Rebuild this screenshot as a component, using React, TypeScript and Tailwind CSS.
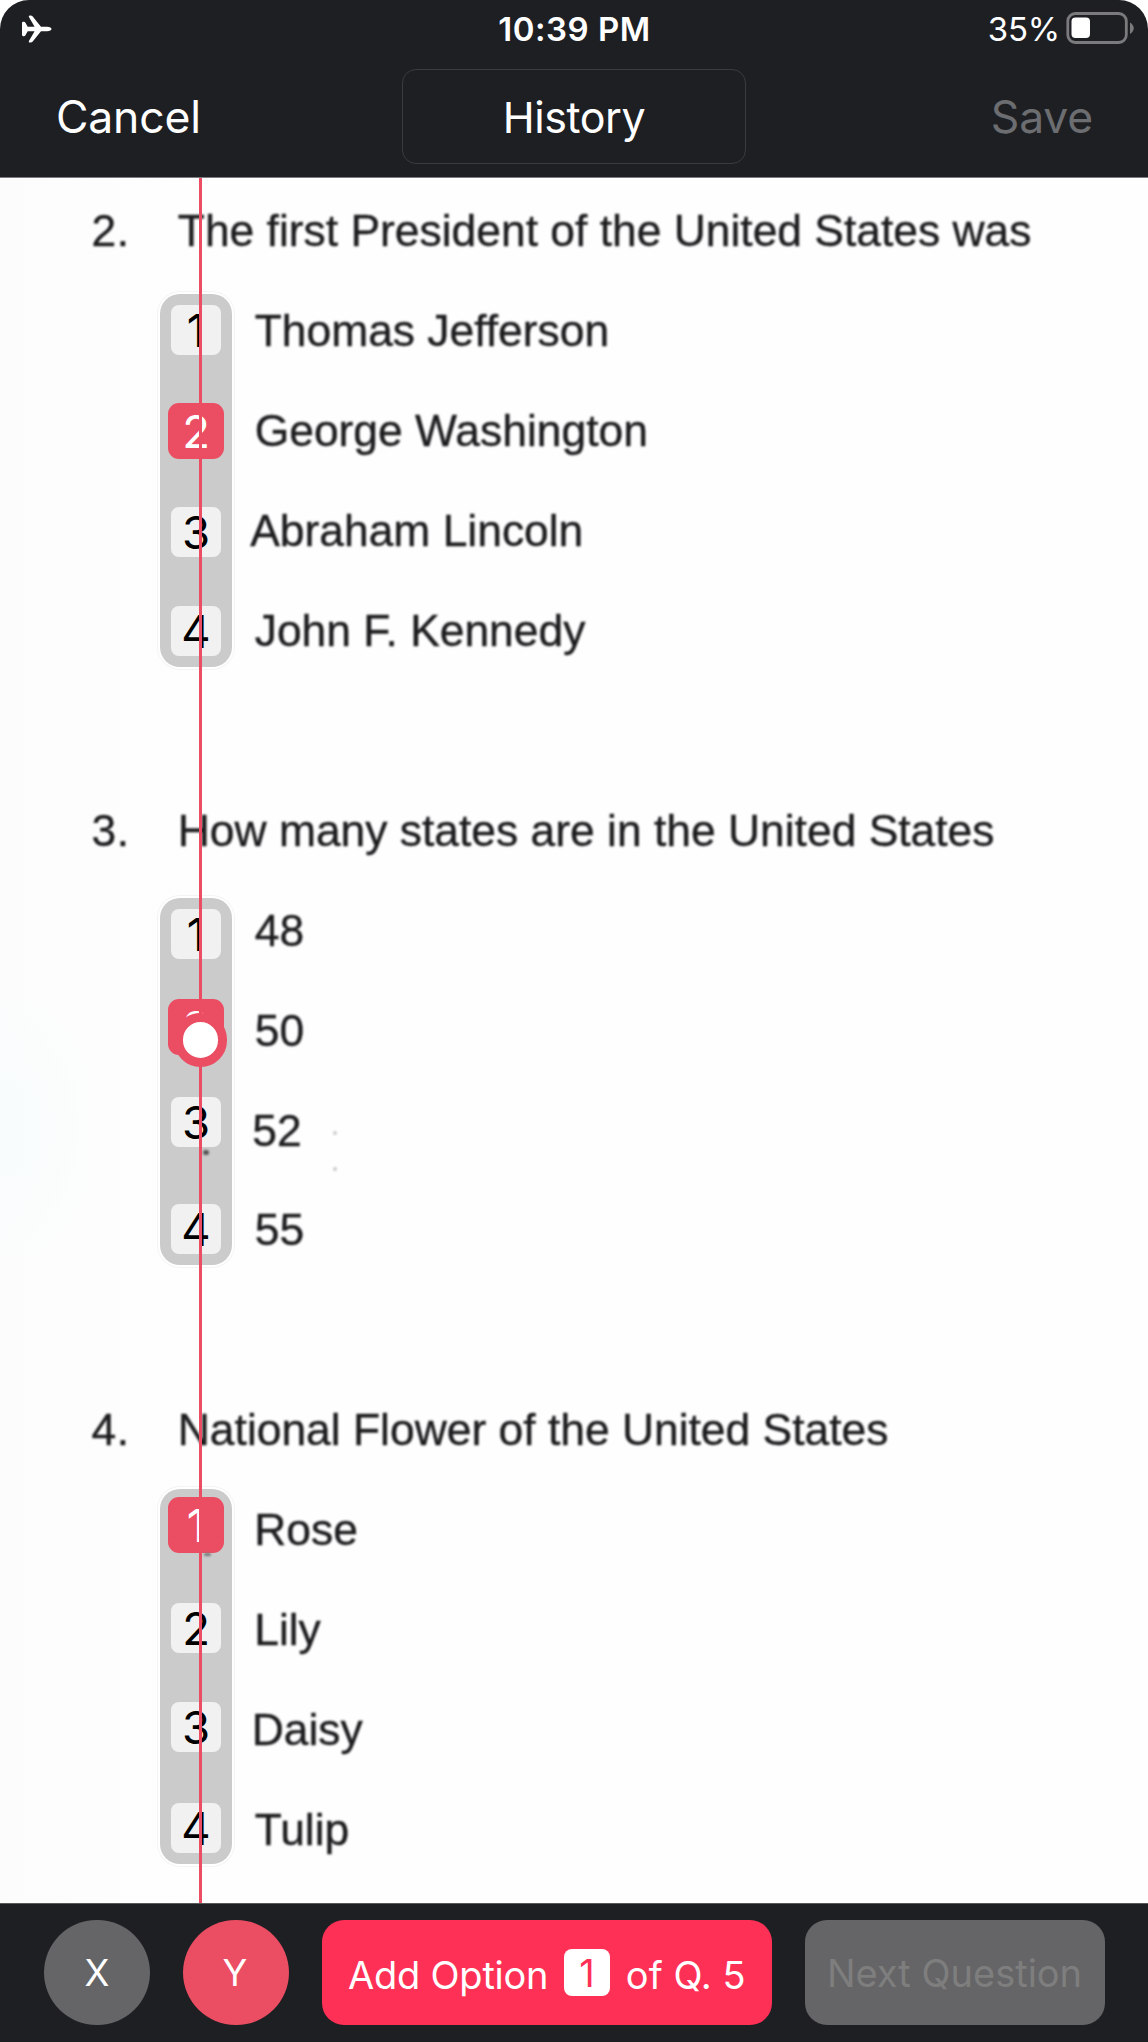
type Tile = { n: number; selected?: boolean; gap: string };
type Option = { text: string; indent: string };
type Question = {
  number: string;
  title: string;
  rail: string;
  tiles: Tile[];
  options: Option[];
};

const questions: Question[] = [
  {
    number: '2.',
    title: 'The first President of the United States was',
    rail: 'mt-[12.8px] h-[373px] pt-[11px]',
    tiles: [
      { n: 1, gap: 'mt-0' },
      { n: 2, gap: 'mt-[48px]', selected: true },
      { n: 3, gap: 'mt-[48px]' },
      { n: 4, gap: 'mt-[49px]' },
    ],
    options: [
      { text: 'Thomas Jefferson', indent: 'ml-0' },
      { text: 'George Washington', indent: 'ml-0' },
      { text: 'Abraham Lincoln', indent: '-ml-[4.5px]' },
      { text: 'John F. Kennedy', indent: 'ml-0' },
    ],
  },
  {
    number: '3.',
    title: 'How many states are in the United States',
    rail: 'mt-[17.2px] h-[367px] pt-[11px]',
    tiles: [
      { n: 1, gap: 'mt-0' },
      { n: 2, gap: 'mt-[40px]', selected: true },
      { n: 3, gap: 'mt-[42px]' },
      { n: 4, gap: 'mt-[57px]' },
    ],
    options: [
      { text: '48', indent: 'ml-0' },
      { text: '50', indent: 'ml-0' },
      { text: '52', indent: '-ml-[2.5px]' },
      { text: '55', indent: 'ml-0' },
    ],
  },
  {
    number: '4.',
    title: 'National Flower of the United States',
    rail: 'mt-[8.7px] h-[375px] pt-[8px]',
    tiles: [
      { n: 1, gap: 'mt-0', selected: true },
      { n: 2, gap: 'mt-[50px]' },
      { n: 3, gap: 'mt-[49px]' },
      { n: 4, gap: 'mt-[51px]' },
    ],
    options: [
      { text: 'Rose', indent: '-ml-[0.5px]' },
      { text: 'Lily', indent: '-ml-[0.5px]' },
      { text: 'Daisy', indent: '-ml-[3px]' },
      { text: 'Tulip', indent: 'ml-0' },
    ],
  },
];

function Airplane() {
  return (
    <svg width="30" height="28" viewBox="22 15.3 30 28" fill="#fff">
      <path d="M22 23.2q0-1.1 1.1-1.1h.8q.9 0 1.4.8L27.7 27H34.6L28.9 17.2q-.7-1.5.9-1.5h.9q1.1 0 1.8.8L41 27H47c3 0 4.5 1.3 4.5 2.3s-1.5 2.3-4.5 2.3H41l-8.5 10.5q-.7.8-1.8.8h-.9q-1.6 0-.9-1.5L34.6 31.6H27.7L25.3 35.7q-.5.8-1.4.8h-.8q-1.1 0-1.1-1.1Z" />
    </svg>
  );
}

function Battery() {
  return (
    <svg width="68" height="32" viewBox="0 0 68 32">
      <rect x="1.8" y="1.5" width="58.5" height="29" rx="7.5" fill="none" stroke="#7b7b7d" strokeWidth="2.8" />
      <rect x="5.5" y="5.5" width="18.5" height="20.5" rx="4" fill="#fff" />
      <path d="M64 10.5c5 3 5 8.500 0 11.500z" fill="#7b7b7d" />
    </svg>
  );
}

function Header() {
  return (
    <header className="h-[178px] border-b border-[#7c7c80] bg-[#1e1f23] text-white">
      <div className="grid h-[58px] grid-cols-3 items-center">
        <div className="pl-[22px]">
          <Airplane />
        </div>
        <div className="pl-[1px] text-center text-[33px] leading-none font-semibold tracking-[0.5px]">10:39 PM</div>
        <div className="flex items-center justify-end gap-[6px] pr-[14px]">
          <span className="text-[33px] leading-none tracking-[-0.2px]">35%</span>
          <div className="-mt-[2px]">
            <Battery />
          </div>
        </div>
      </div>
      <div className="grid h-[117px] grid-cols-[1fr_344px_1fr] items-center">
        <button className="pt-[1px] pl-[56px] text-left text-[44.5px] leading-none tracking-[-0.2px]">Cancel</button>
        <div className="flex h-[95px] items-center justify-center rounded-[14px] border border-[#3a3b3f] pt-[1px] text-[43px] leading-none tracking-[-0.44px]">
          History
        </div>
        <button className="pt-[1px] pr-[55px] text-right text-[44.5px] leading-none tracking-[-0.2px] text-[#6c6d70]">Save</button>
      </div>
    </header>
  );
}

function NumberTile({ n, selected, gap }: Tile) {
  const look = selected
    ? 'size-[56px] rounded-[11px] bg-[#eb4d63] text-white'
    : 'size-[50px] rounded-[8px] bg-[#f1f1f1] text-black';
  return (
    <div className={`flex shrink-0 items-center justify-center pt-[2px] text-[45.5px] leading-none ${look} ${gap}`}>{n}</div>
  );
}

function QuestionBlock({ number, title, rail, tiles, options }: Question) {
  return (
    <section className="h-[599.5px] font-['Liberation_Sans',sans-serif] text-[44.4px] leading-[100px] whitespace-nowrap text-[#1c1c1e]">
      <div className="flex h-[100px] pl-[91.5px] blur-[0.9px] [-webkit-text-stroke:0.4px_#1c1c1e]">
        <span className="w-[86.3px] tracking-[0.5px]">{number}</span>
        <h2>{title}</h2>
      </div>
      <div className="flex pl-[160px]">
        <div
          className={`flex w-[72px] shrink-0 flex-col items-center rounded-[20px] bg-[#cbcbcb] font-['Inter',sans-serif] shadow-[0_0_0_2px_#fff,0_0_0_3px_#f4f4f4] ${rail}`}
        >
          {tiles.map((t) => (
            <NumberTile key={t.n} {...t} />
          ))}
        </div>
        <ul className="ml-[22.7px] blur-[0.9px] [-webkit-text-stroke:0.4px_#1c1c1e]">
          {options.map((o) => (
            <li key={o.text} className={`h-[99.9px] ${o.indent}`}>
              {o.text}
            </li>
          ))}
        </ul>
      </div>
    </section>
  );
}

function Footer() {
  return (
    <footer className="flex h-[139px] gap-[33px] border-t border-[#58595b] bg-[#1e1f23] pt-[16px] pl-[44px] text-[38px] leading-none whitespace-nowrap text-white">
      <button className="h-[105px] w-[106px] shrink-0 rounded-full bg-[#656567] pt-[2px] text-[36.5px]">X</button>
      <button className="h-[105px] w-[106px] shrink-0 rounded-full bg-[#eb4d63] pt-[2px] pr-[2px] text-[36.5px]">Y</button>
      <button className="flex h-[105px] w-[449.5px] shrink-0 items-center rounded-[22px] bg-[#ff3056] pl-[26px]">
        <span className="pt-[5px] tracking-[-0.23px]">Add Option</span>
        <span className="ml-[15.5px] flex size-[46.5px] items-center justify-center rounded-[8px] bg-white text-[#ff3056]">1</span>
        <span className="ml-[15.5px] pt-[5px]">of Q. 5</span>
      </button>
      <button className="h-[105px] w-[300px] shrink-0 rounded-[22px] bg-[#656567] text-[#7e7e7e]">Next Question</button>
    </footer>
  );
}

export default function App() {
  return (
    <div className="h-[2042px] w-[1148px] bg-white">
      <div className="flex h-full flex-col overflow-hidden rounded-t-[29px] font-['Inter',sans-serif]">
        <Header />
        <main className="relative h-[1725px] overflow-hidden bg-white bg-[radial-gradient(ellipse_110px_160px_at_0_950px,#f8fcfd,transparent),linear-gradient(to_right,#fcfcfc,#fefefe_200px,#fefefe)] pt-[3.3px]">
          {questions.map((q) => (
            <QuestionBlock key={q.number} {...q} />
          ))}
          {/* dust specks on the scanned page */}
          <span className="absolute top-[972px] left-[203px] h-[5px] w-[6px] rounded-full bg-[#555] blur-[1px]" />
          <span className="absolute top-[953px] left-[333px] size-[4px] rounded-full bg-[#ccc] blur-[1px]" />
          <span className="absolute top-[989px] left-[333px] size-[4px] rounded-full bg-[#ccc] blur-[1px]" />
          <span className="absolute top-[1375px] left-[204px] h-[3px] w-[7px] rounded-full bg-[#777] blur-[1px]" />
          {/* vertical alignment guide with its drag handle */}
          <div className="absolute inset-y-0 left-[199px] w-[3px] bg-[#eb4d63]" />
          <div className="absolute top-[835px] left-[173.5px] size-[53.5px] rounded-full border-[9px] border-[#eb4d63] bg-white" />
        </main>
        <Footer />
      </div>
    </div>
  );
}
